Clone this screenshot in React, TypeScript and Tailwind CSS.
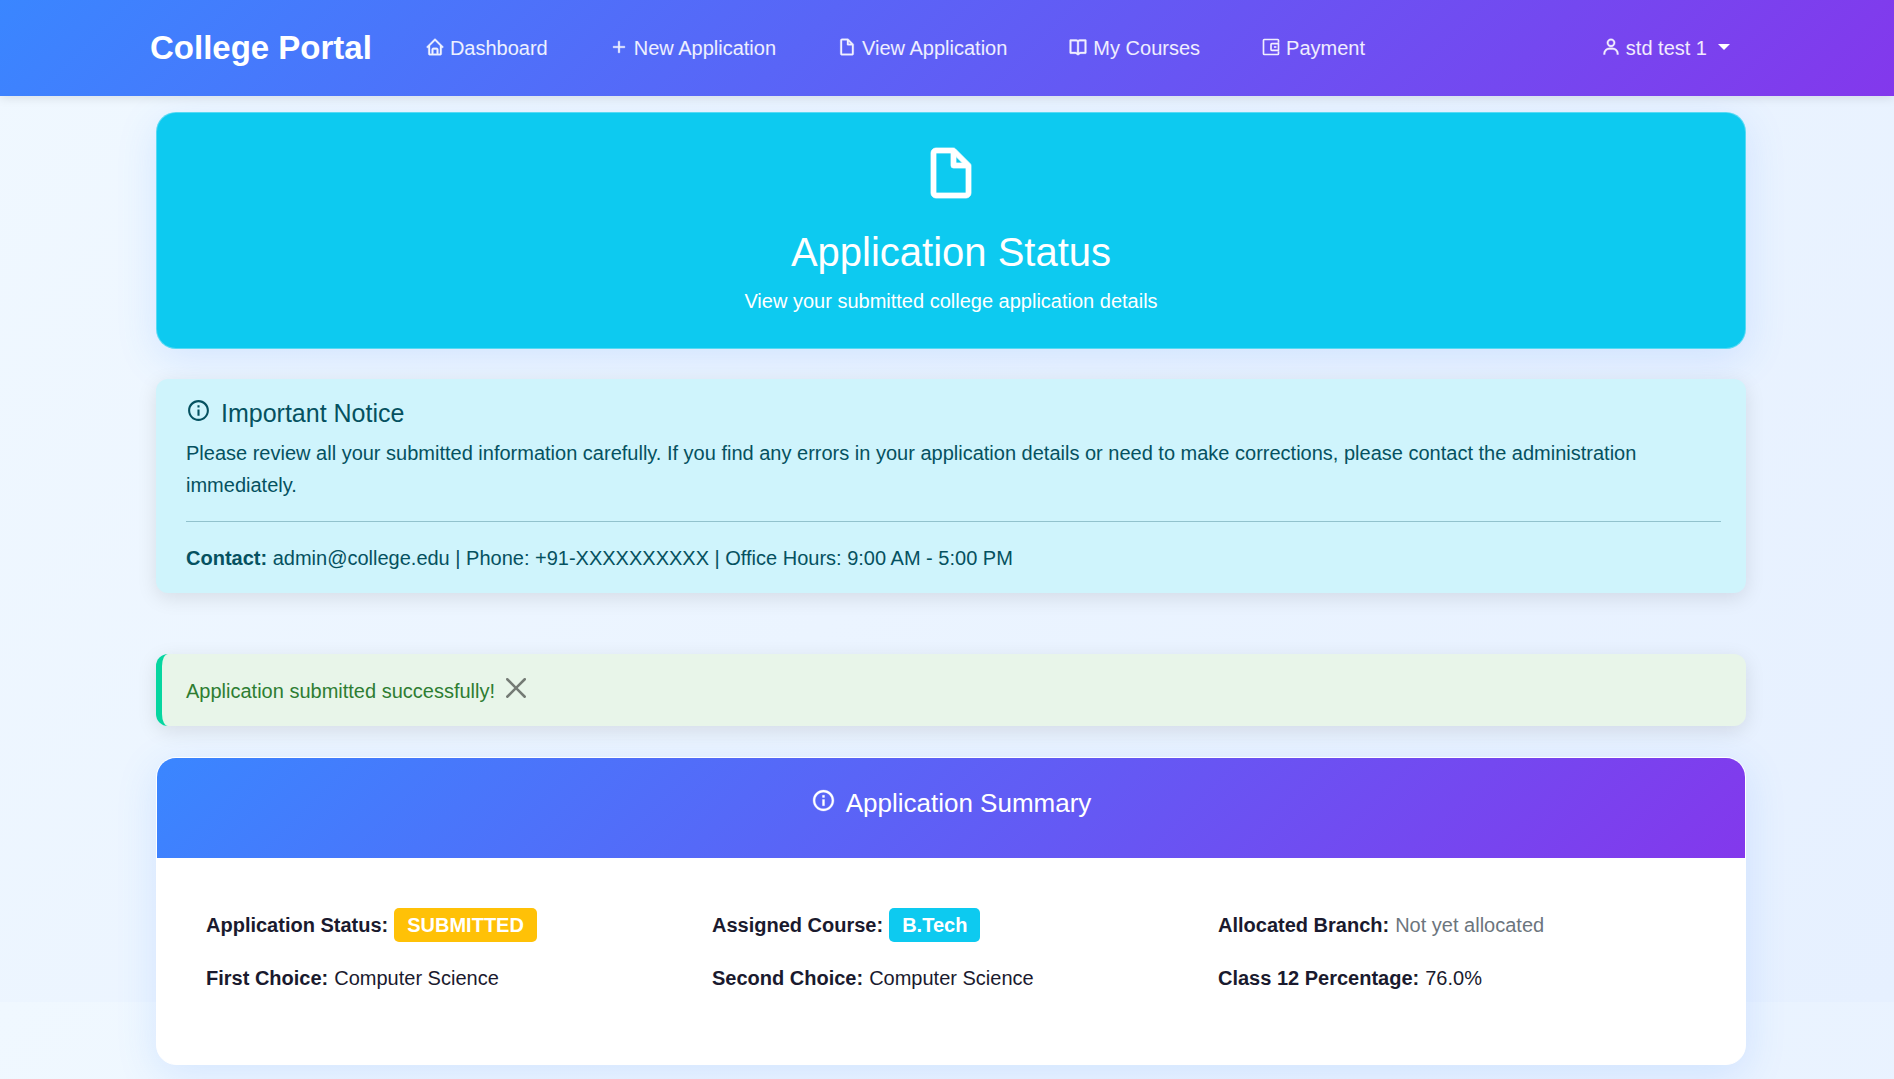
import type { ComponentType, ReactNode } from "react";
import { BiBookOpen, BiFileBlank, BiHome, BiInfoCircle, BiPlus, BiUser } from "react-icons/bi";

function WalletIcon({ className }: { className?: string }) {
  return (
    <svg
      viewBox="0 0 24 24"
      fill="none"
      stroke="currentColor"
      strokeWidth="2"
      strokeLinejoin="round"
      className={className}
      aria-hidden="true"
    >
      <path d="M21 7V4a1 1 0 0 0-1-1H4a1 1 0 0 0-1 1v16a1 1 0 0 0 1 1h16a1 1 0 0 0 1-1v-3" />
      <path d="M21 8h-8a1 1 0 0 0-1 1v6a1 1 0 0 0 1 1h8z" />
      <path d="M15.5 12h3" />
    </svg>
  );
}

const links: { label: string; Icon: ComponentType<{ className?: string }>; iconClass: string }[] = [
  { label: "Dashboard", Icon: BiHome, iconClass: "mt-[5px] size-5 stroke-[0.4]" },
  { label: "New Application", Icon: BiPlus, iconClass: "mt-[5px] size-5 stroke-[0.4]" },
  { label: "View Application", Icon: BiFileBlank, iconClass: "mt-[5px] size-5 stroke-[0.4]" },
  { label: "My Courses", Icon: BiBookOpen, iconClass: "mt-[5px] size-5 stroke-[0.4]" },
  { label: "Payment", Icon: WalletIcon, iconClass: "mt-[5px] size-5" },
];

function Navbar() {
  return (
    <header className="relative bg-linear-[135deg,#3a86ff,#8338ec] pl-[150px] pr-[164px] shadow-[0_2px_10px_rgba(0,0,0,0.1)]">
      <nav className="flex h-24 items-center text-white">
        <a href="#" className="text-[33px] leading-10 font-bold whitespace-nowrap">
          College Portal
        </a>
        <ul className="ml-[53px] flex gap-[61px]">
          {links.map(({ label, Icon, iconClass }) => (
            <li key={label}>
              <a href="#" className="flex gap-[5px] whitespace-nowrap text-white/90">
                <Icon className={iconClass} />
                {label}
              </a>
            </li>
          ))}
        </ul>
        <button type="button" className="ml-auto flex gap-[5px] whitespace-nowrap text-white/90">
          <BiUser className="mt-[5px] size-5 stroke-[0.4]" />
          std test 1
          <svg viewBox="0 0 12 6" className="mt-3 ml-[6px] h-[6px] w-3 fill-white" aria-hidden="true">
            <path d="M0 0h12L6 6z" />
          </svg>
        </button>
      </nav>
    </header>
  );
}

function Field({ label, children }: { label: string; children: ReactNode }) {
  return (
    <div className="flex items-center gap-[6px] whitespace-nowrap">
      <dt className="font-bold">{label}</dt>
      <dd>{children}</dd>
    </div>
  );
}

export default function App() {
  return (
    <div className="min-h-screen overflow-hidden bg-linear-[135deg,#f0f8ff,#e6f0ff] bg-size-[100%_1002px] font-['Liberation_Sans',Arial,sans-serif] text-xl leading-8 text-[#1a1a2e]">
      <Navbar />
      <main className="mt-4 mb-8 pr-[148px] pl-[156px]">
        <section className="flex flex-col items-center rounded-[20px] border border-white/30 bg-[#0dcaf0] pt-[30px] pb-[31px] text-center text-white shadow-[0_10px_40px_rgba(58,134,255,0.15)]">
          <BiFileBlank className="size-[60px] stroke-[0.3]" />
          <h1 className="mt-[25px] text-[40px] leading-12">Application Status</h1>
          <p className="mt-[9px]">View your submitted college application details</p>
        </section>

        <section className="mt-[30px] rounded-[12px] bg-[#cff4fc] py-[19px] pr-[25px] pl-[30px] text-[#055160] shadow-[0_5px_20px_rgba(0,0,0,0.1)]">
          <h2 className="flex gap-[10px] text-[25px] leading-[30px]">
            <BiInfoCircle className="size-[25px]" />
            Important Notice
          </h2>
          <p className="mt-[9px]">
            Please review all your submitted information carefully. If you find any errors in your
            application details or need to make corrections, please contact the administration
            immediately.
          </p>
          <hr className="my-5 border-[#055160]/30" />
          <p>
            <strong>Contact:</strong> admin@college.edu | Phone: +91-XXXXXXXXXX | Office Hours: 9:00
            AM - 5:00 PM
          </p>
        </section>

        <div
          role="status"
          className="mt-[61px] flex items-start rounded-[12px] border-l-6 border-[#06d6a0] bg-[#e8f5e9] pt-[21px] pb-[19px] pl-6 text-[#2e7d32] shadow-[0_5px_20px_rgba(0,0,0,0.1)]"
        >
          Application submitted successfully!
          <button type="button" aria-label="Close" className="mt-[3px] ml-[11px] text-black/50">
            <svg viewBox="0 0 16 16" className="size-5 fill-current" aria-hidden="true">
              <path d="M.293.293a1 1 0 0 1 1.414 0L8 6.586 14.293.293a1 1 0 1 1 1.414 1.414L9.414 8l6.293 6.293a1 1 0 0 1-1.414 1.414L8 9.414l-6.293 6.293a1 1 0 0 1-1.414-1.414L6.586 8 .293 1.707a1 1 0 0 1 0-1.414z" />
            </svg>
          </button>
        </div>

        <section className="mt-[31px] overflow-hidden rounded-[20px] border border-white bg-white shadow-[0_10px_40px_rgba(58,134,255,0.15)]">
          <h2 className="flex h-[100px] justify-center gap-[10px] bg-linear-[135deg,#3a86ff,#8338ec] pt-[30px] text-[26px] leading-[30px] text-white">
            <BiInfoCircle className="size-[25px] stroke-[0.3]" />
            Application Summary
          </h2>
          <dl className="grid grid-cols-3 gap-x-[30px] gap-y-5 pt-[50px] pr-[51px] pb-[70px] pl-[49px]">
            <Field label="Application Status:">
              <span className="block rounded-[5px] bg-[#ffc107] px-[13px] py-[7px] leading-5 font-bold text-white">
                SUBMITTED
              </span>
            </Field>
            <Field label="Assigned Course:">
              <span className="block rounded-[5px] bg-[#0dcaf0] px-[13px] py-[7px] leading-5 font-bold text-white">
                B.Tech
              </span>
            </Field>
            <Field label="Allocated Branch:">
              <span className="text-[#6c757d]">Not yet allocated</span>
            </Field>
            <Field label="First Choice:">Computer Science</Field>
            <Field label="Second Choice:">Computer Science</Field>
            <Field label="Class 12 Percentage:">76.0%</Field>
          </dl>
        </section>
      </main>
    </div>
  );
}
